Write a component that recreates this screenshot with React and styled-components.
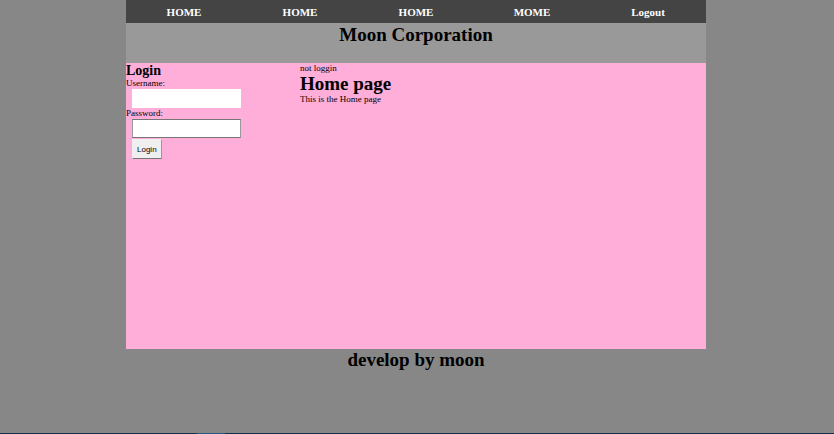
import React from "react";
import styled, { createGlobalStyle } from "styled-components";

const GlobalStyle = createGlobalStyle`
  * {
    box-sizing: border-box;
    margin: 0;
    padding: 0;
  }
  body {
    background: #878787;
    color: #000;
    font-family: "Liberation Serif", "Times New Roman", serif;
    font-size: 9px;
    line-height: 11px;
  }
`;

const Screen = styled.div`
  display: flex;
  flex-direction: column;
  min-height: 100vh;
`;

const Page = styled.div`
  flex: 1;
  width: 100%;
  max-width: 582px;
  margin: 0 auto;
  padding-right: 2px;
`;

const Nav = styled.nav`
  display: grid;
  grid-template-columns: repeat(5, 1fr);
  background: #444;
`;

const NavLink = styled.a`
  padding: 5px 0 3px;
  color: #fff;
  font-size: 11px;
  font-weight: bold;
  line-height: 15px;
  text-align: center;
  text-decoration: none;
`;

const Header = styled.header`
  min-height: 40px;
  padding-top: 2px;
  background: #999;
  text-align: center;
`;

const Title = styled.h1`
  font-size: 19px;
  line-height: 20px;
`;

const Content = styled.div`
  display: grid;
  grid-template-columns: 3fr 7fr;
  min-height: 286px;
  background: #ffaed9;
`;

const LoginForm = styled.form`
  display: flex;
  flex-direction: column;
  align-items: flex-start;
`;

const LoginTitle = styled.h2`
  font-size: 14px;
  line-height: 15px;
`;

const Field = styled.input`
  width: 109px;
  height: 19px;
  margin-left: 6px;
  padding: 4px;
  border: 1px solid;
  border-color: ${(p) => (p.$outlined ? "#767676 #999 #767676 #999" : "#fff")};
  background: #fff;
  font: inherit;
`;

const LoginButton = styled.button`
  height: 20px;
  margin: 1px 0 0 6px;
  padding: 0 4px;
  border: 1px solid;
  border-color: #efefef #999 #767676 #efefef;
  background: #efefef;
  color: #000;
  font-family: "Liberation Sans", Arial, sans-serif;
  font-size: 8px;
`;

const Footer = styled.footer`
  padding-top: 1px;
  text-align: center;
`;

const Taskbar = styled.div`
  display: flex;
  height: 1px;
  padding-left: 197px;
  background: #123047;
`;

const ActiveTask = styled.div`
  width: 28px;
  background: #255b84;
`;

const links = ["HOME", "HOME", "HOME", "MOME", "Logout"];

export default function App() {
  return (
    <Screen>
      <GlobalStyle />
      <Page>
        <Nav>
          {links.map((label, i) => (
            <NavLink key={i} href="#">{label}</NavLink>
          ))}
        </Nav>
        <Header>
          <Title>Moon Corporation</Title>
        </Header>
        <Content>
          <LoginForm onSubmit={(e) => e.preventDefault()}>
            <LoginTitle>Login</LoginTitle>
            <label htmlFor="username">Username:</label>
            <Field id="username" type="text" />
            <label htmlFor="password">Password:</label>
            <Field id="password" type="password" $outlined />
            <LoginButton type="submit">Login</LoginButton>
          </LoginForm>
          <main>
            <p>not loggin</p>
            <Title>Home page</Title>
            <p>This is the Home page</p>
          </main>
        </Content>
        <Footer>
          <Title>develop by moon</Title>
        </Footer>
      </Page>
      <Taskbar>
        <ActiveTask />
      </Taskbar>
    </Screen>
  );
}
